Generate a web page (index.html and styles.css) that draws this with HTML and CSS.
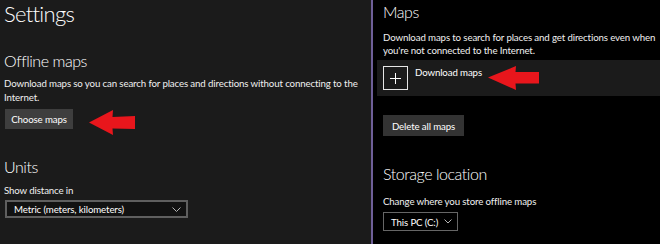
FILE: index.html
```html
<!DOCTYPE html>
<html lang="en">
<head>
  <meta charset="UTF-8">
  <title>Maps settings</title>
  <link rel="stylesheet" href="styles.css">
</head>
<body>
  <div class="screen">
    <div class="pane pane-left">
      <h1>Settings</h1>
      <h2 class="offline-title">Offline maps</h2>
      <p class="desc">Download maps so you can search for places and directions without connecting to the Internet.</p>
      <div class="note-row">
        <button class="btn">Choose maps</button>
        <svg class="arrow arrow-left" width="46" height="25" viewBox="0 0 46 25">
          <polygon points="0,12.5 24,0 23.5,7 46,6 46,19 23.5,18.5 24,25" fill="#e8161c"/>
        </svg>
      </div>
      <h2 class="units-title">Units</h2>
      <p class="label">Show distance in</p>
      <div class="select select-wide">
        <span>Metric (meters, kilometers)</span>
        <svg width="9" height="5" viewBox="0 0 9 5"><polyline points="0.5,0.5 4.5,4.5 8.5,0.5" fill="none" stroke="#b5b5b5" stroke-width="1"/></svg>
      </div>
    </div>

    <div class="divider"></div>

    <div class="pane pane-right">
      <h2 class="maps-title">Maps</h2>
      <p class="desc desc-right">Download maps to search for places and get directions even when you're not connected to the Internet.</p>
      <div class="download-row">
        <div class="plus-box">
          <svg width="11" height="11" viewBox="0 0 11 11"><path d="M5.5 0v11M0 5.5h11" stroke="#fff" stroke-width="1"/></svg>
        </div>
        <span class="download-text">Download maps</span>
        <svg class="arrow arrow-right" width="51" height="24" viewBox="0 0 51 24">
          <polygon points="0,11.5 28,0 27.5,6 51,6 51,17.5 27.5,17.5 28,24" fill="#e8161c"/>
        </svg>
      </div>
      <button class="btn btn-delete">Delete all maps</button>
      <h2 class="storage-title">Storage location</h2>
      <p class="label">Change where you store offline maps</p>
      <div class="select select-small">
        <span>This PC (C:)</span>
        <svg width="8" height="5" viewBox="0 0 8 5"><polyline points="0.5,0.5 4,4 7.5,0.5" fill="none" stroke="#b5b5b5" stroke-width="1"/></svg>
      </div>
    </div>
  </div>
</body>
</html>
```

FILE: styles.css
```css
html, body {
  margin: 0;
  padding: 0;
  background: #000;
}
body {
  font-family: Lato, "Open Sans", sans-serif;
  color: #fff;
  width: 660px;
  height: 244px;
  overflow: hidden;
}
.screen {
  display: flex;
  height: 244px;
}
.pane-left {
  width: 367px;
  padding-left: 4px;
  background: #1b1b1b;
}
.divider {
  width: 2px;
  background: #6e5f98;
}
.pane-right {
  flex: 1;
  padding-left: 4px;
  background: #000;
}
h1 {
  margin: 0;
  font-size: 22px;
  line-height: 28px;
  font-weight: 300;
  letter-spacing: -0.7px;
}
h2 {
  margin: 0;
  font-size: 16px;
  line-height: 20px;
  font-weight: 300;
  letter-spacing: -0.45px;
}
.desc, .label {
  margin: 0;
  font-size: 9.7px;
  line-height: 14px;
  letter-spacing: -0.13px;
  color: #f0f0f0;
}
.offline-title {
  margin-top: 23px;
}
.pane-left .desc {
  margin-top: 5px;
}
.note-row {
  display: flex;
  align-items: flex-start;
  gap: 16px;
  margin-top: 5px;
}
.btn {
  font-family: inherit;
  font-size: 9.7px;
  letter-spacing: -0.13px;
  color: #fff;
  border: none;
  padding: 0;
  height: 20px;
  margin-left: 1px;
  background: #3e3e3e;
}
.note-row .btn {
  width: 68px;
}
.arrow-left {
  margin-top: 1px;
}
.units-title {
  margin-top: 22px;
}
.label {
  margin-top: 6px;
}
.select {
  display: flex;
  align-items: center;
  justify-content: space-between;
  box-sizing: border-box;
  margin-left: 1px;
  font-size: 9.7px;
  letter-spacing: -0.13px;
  white-space: nowrap;
  background: #121212;
}
.select-wide {
  width: 183px;
  height: 18px;
  margin-top: 3px;
  padding: 0 5px 0 7px;
  border: 2px solid #5f5f5f;
}
.maps-title {
  padding-top: 2px;
  margin-left: 6px;
}
.desc-right {
  margin: 9px 0 0 6px;
  line-height: 12.5px;
}
.download-row {
  display: flex;
  align-items: flex-start;
  height: 36px;
  box-sizing: border-box;
  margin-top: 4px;
  padding: 6px 0 0 6px;
  background: #1b1b1b;
}
.plus-box {
  width: 25px;
  height: 24px;
  box-sizing: border-box;
  border: 1px solid #e6e6e6;
  display: flex;
  align-items: center;
  justify-content: center;
}
.download-text {
  font-size: 9.7px;
  line-height: 14px;
  letter-spacing: -0.13px;
  margin: -1px 0 0 7px;
}
.arrow-right {
  margin-left: 6px;
}
.btn-delete {
  display: block;
  width: 81px;
  height: 21px;
  margin: 19px 0 0 6px;
  background: #333;
}
.storage-title {
  margin: 28px 0 0 6px;
}
.pane-right .label {
  margin: 10px 0 0 6px;
}
.select-small {
  width: fit-content;
  gap: 6px;
  height: 19px;
  margin: 4px 0 0 6px;
  padding: 0 5px 0 7px;
  border: 1px solid #666;
  background: #000;
}
```
